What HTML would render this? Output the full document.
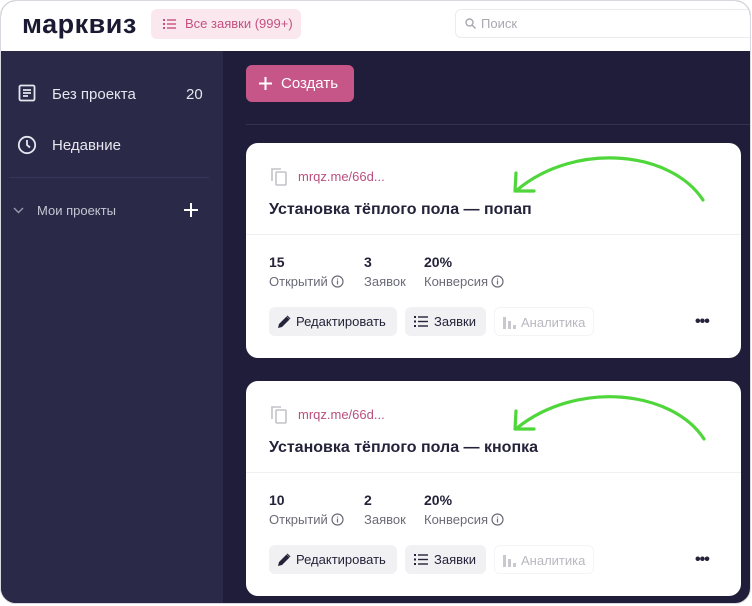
<!DOCTYPE html>
<html><head><meta charset="utf-8">
<style>
*{box-sizing:border-box;margin:0;padding:0}
body{width:752px;height:606px;background:#fff;font-family:"Liberation Sans",sans-serif;position:relative;overflow:hidden}
.frame{position:absolute;left:0;top:0;width:751px;height:604px;border-radius:16px;overflow:hidden;background:#1f1d3a;border:1px solid #d8d8de}
.header{position:absolute;left:0;top:0;right:0;height:50px;background:#fff}
.logo{position:absolute;left:21px;top:8px;font-size:27px;font-weight:bold;color:#1b1a33;letter-spacing:0.5px}
.allreq{position:absolute;left:150px;top:8px;width:150px;height:30px;background:#fbe8ef;border-radius:6px;color:#c4507f;font-size:13px;line-height:30px;padding-left:34px}
.search{position:absolute;left:454px;top:8px;width:300px;height:29px;border:1px solid #ececf0;border-radius:6px;color:#a8a8b0;font-size:13px;line-height:27px;padding-left:25px}
.side{position:absolute;left:0;top:50px;width:222px;bottom:0;background:#2a2947}
.si{position:absolute;left:51px;color:#e6e6ee;font-size:15px}
.create{position:absolute;left:245px;top:64px;width:108px;height:37px;background:#c65588;border-radius:6px;color:#fff;font-size:15px;line-height:37px;padding-left:35px}
.hr{position:absolute;left:245px;right:0;top:123px;height:1px;background:#34334e}
.card{position:absolute;left:245px;width:495px;height:215px;background:#fff;border-radius:12px}
.link{position:absolute;left:52px;top:26px;font-size:13px;color:#b9507f}
.title{position:absolute;left:23px;top:58px;font-size:16px;font-weight:bold;color:#24233a}
.sep{position:absolute;left:0;right:0;top:91px;height:1px;background:#f0f0f3}
.num{position:absolute;top:111px;font-size:14px;font-weight:bold;color:#24233a}
.lbl{position:absolute;top:131px;font-size:13px;line-height:15px;color:#6b6b78;white-space:nowrap}
.lbl svg{vertical-align:-2px;margin-left:3px}
.btn{position:absolute;top:164px;height:29px;border-radius:6px;background:#f1f1f4;font-size:13px;color:#24233a;line-height:29px}
.dots{position:absolute;left:449px;top:170px;font-size:16px;font-weight:bold;color:#24233a;letter-spacing:-1px}
</style></head><body>
<div class="frame">
<div class="header">
<div class="logo">марквиз</div>
<div class="allreq"><svg style="position:absolute;left:12px;top:9px" width="13" height="12" viewBox="0 0 13 12" fill="#c4507f"><rect x="0" y="1" width="2" height="2"/><rect x="0" y="5" width="2" height="2"/><rect x="0" y="9" width="2" height="2"/><rect x="4" y="1.3" width="9" height="1.4"/><rect x="4" y="5.3" width="9" height="1.4"/><rect x="4" y="9.3" width="9" height="1.4"/></svg>Все заявки (999+)</div>
<div class="search"><svg style="position:absolute;left:9px;top:8px" width="11" height="11" viewBox="0 0 11 11" fill="none" stroke="#a8a8b0" stroke-width="1.4"><circle cx="4.5" cy="4.5" r="3.5"/><path d="M7 7l3.5 3.5"/></svg>Поиск</div>
</div>
<div class="side">
<svg style="position:absolute;left:17px;top:33px" width="18" height="18" viewBox="0 0 18 18" fill="none" stroke="#e6e6ee" stroke-width="1.8"><rect x="1.5" y="1.5" width="15" height="15" rx="1.5"/><path d="M5 6h8M5 9h8M5 12h5"/></svg>
<div class="si" style="top:35px">Без проекта</div>
<div class="si" style="left:185px;top:35px">20</div>
<svg style="position:absolute;left:16px;top:84px" width="20" height="20" viewBox="0 0 20 20" fill="none" stroke="#e6e6ee" stroke-width="1.8"><circle cx="10" cy="10" r="8.2"/><path d="M10 5v5l3 2.5"/></svg>
<div class="si" style="top:86px">Недавние</div>
<div style="position:absolute;left:8px;top:126px;width:200px;height:1px;background:#37365a"></div>
<svg style="position:absolute;left:12px;top:156px" width="11" height="7" viewBox="0 0 11 7" fill="none" stroke="#9a99b0" stroke-width="1.4"><path d="M1 1l4.5 4.5L10 1"/></svg>
<div class="si" style="left:36px;top:152px;font-size:13px;color:#c6c6d4">Мои проекты</div>
<svg style="position:absolute;left:183px;top:152px" width="14" height="14" viewBox="0 0 14 14" stroke="#fff" stroke-width="2"><path d="M7 0v14M0 7h14"/></svg>
</div>
<div class="create"><svg style="position:absolute;left:13px;top:12px" width="13" height="13" viewBox="0 0 13 13" stroke="#fff" stroke-width="2"><path d="M6.5 0v13M0 6.5h13"/></svg>Создать</div>
<div class="hr"></div>

<div class="card" style="top:142px">
<svg style="position:absolute;left:24px;top:24px" width="19" height="20" viewBox="0 0 19 20" fill="none" stroke="#c2c2c8" stroke-width="1.6"><path d="M2 14V2h9"/><rect x="6" y="5" width="10" height="13" rx="1"/></svg>
<div class="link">mrqz.me/66d...</div>
<div class="title">Установка тёплого пола — попап</div>
<div class="sep"></div>
<div class="num" style="left:23px">15</div><div class="num" style="left:118px">3</div><div class="num" style="left:178px">20%</div>
<div class="lbl" style="left:23px">Открытий<svg width="13" height="13" viewBox="0 0 13 13" fill="none" stroke="#6b6b78" stroke-width="1.2"><circle cx="6.5" cy="6.5" r="5.5"/><path d="M6.5 5.5v4M6.5 3.5v1"/></svg></div><div class="lbl" style="left:118px">Заявок</div><div class="lbl" style="left:178px">Конверсия<svg width="13" height="13" viewBox="0 0 13 13" fill="none" stroke="#6b6b78" stroke-width="1.2"><circle cx="6.5" cy="6.5" r="5.5"/><path d="M6.5 5.5v4M6.5 3.5v1"/></svg></div>
<div class="btn" style="left:23px;width:128px;padding-left:27px"><svg style="position:absolute;left:9px;top:8px" width="13" height="13" viewBox="0 0 13 13" fill="#24233a"><path d="M0 13l1-4 7.5-7.5 3 3L4 12z M9.5 0.5l3 3-0.8 0.8-3-3z"/></svg>Редактировать</div>
<div class="btn" style="left:159px;width:81px;padding-left:29px"><svg style="position:absolute;left:9px;top:9px" width="14" height="11" viewBox="0 0 14 11" fill="#24233a"><rect y="0" width="2" height="2"/><rect y="4.5" width="2" height="2"/><rect y="9" width="2" height="2"/><rect x="4" y="0.3" width="10" height="1.4"/><rect x="4" y="4.8" width="10" height="1.4"/><rect x="4" y="9.3" width="10" height="1.4"/></svg>Заявки</div>
<div class="btn" style="left:248px;width:100px;padding-left:26px;background:#fff;border:1px solid #f4f4f6;color:#b8b8c0"><svg style="position:absolute;left:8px;top:7px" width="13" height="14" viewBox="0 0 13 14" fill="#c8c8ce"><rect x="0" y="2" width="3" height="12"/><rect x="5" y="6" width="3" height="8"/><rect x="10" y="10" width="3" height="4"/></svg>Аналитика</div>
<div class="dots">•••</div>
</div>

<div class="card" style="top:380px">
<svg style="position:absolute;left:24px;top:24px" width="19" height="20" viewBox="0 0 19 20" fill="none" stroke="#c2c2c8" stroke-width="1.6"><path d="M2 14V2h9"/><rect x="6" y="5" width="10" height="13" rx="1"/></svg>
<div class="link">mrqz.me/66d...</div>
<div class="title">Установка тёплого пола — кнопка</div>
<div class="sep"></div>
<div class="num" style="left:23px">10</div><div class="num" style="left:118px">2</div><div class="num" style="left:178px">20%</div>
<div class="lbl" style="left:23px">Открытий<svg width="13" height="13" viewBox="0 0 13 13" fill="none" stroke="#6b6b78" stroke-width="1.2"><circle cx="6.5" cy="6.5" r="5.5"/><path d="M6.5 5.5v4M6.5 3.5v1"/></svg></div><div class="lbl" style="left:118px">Заявок</div><div class="lbl" style="left:178px">Конверсия<svg width="13" height="13" viewBox="0 0 13 13" fill="none" stroke="#6b6b78" stroke-width="1.2"><circle cx="6.5" cy="6.5" r="5.5"/><path d="M6.5 5.5v4M6.5 3.5v1"/></svg></div>
<div class="btn" style="left:23px;width:128px;padding-left:27px"><svg style="position:absolute;left:9px;top:8px" width="13" height="13" viewBox="0 0 13 13" fill="#24233a"><path d="M0 13l1-4 7.5-7.5 3 3L4 12z M9.5 0.5l3 3-0.8 0.8-3-3z"/></svg>Редактировать</div>
<div class="btn" style="left:159px;width:81px;padding-left:29px"><svg style="position:absolute;left:9px;top:9px" width="14" height="11" viewBox="0 0 14 11" fill="#24233a"><rect y="0" width="2" height="2"/><rect y="4.5" width="2" height="2"/><rect y="9" width="2" height="2"/><rect x="4" y="0.3" width="10" height="1.4"/><rect x="4" y="4.8" width="10" height="1.4"/><rect x="4" y="9.3" width="10" height="1.4"/></svg>Заявки</div>
<div class="btn" style="left:248px;width:100px;padding-left:26px;background:#fff;border:1px solid #f4f4f6;color:#b8b8c0"><svg style="position:absolute;left:8px;top:7px" width="13" height="14" viewBox="0 0 13 14" fill="#c8c8ce"><rect x="0" y="2" width="3" height="12"/><rect x="5" y="6" width="3" height="8"/><rect x="10" y="10" width="3" height="4"/></svg>Аналитика</div>
<div class="dots">•••</div>
</div>

<svg style="position:absolute;left:0;top:0" width="752" height="606" fill="none" stroke="#4fd63a" stroke-width="3.2" stroke-linecap="round" stroke-linejoin="round">
<path d="M702 199C670 150 575 140 516 189"/><path d="M515 172L514 190L533 190"/>
<path d="M703 438C671 389 576 379 516 427"/><path d="M515 410L514 428L533 428"/>
</svg>
</div>
</body></html>
